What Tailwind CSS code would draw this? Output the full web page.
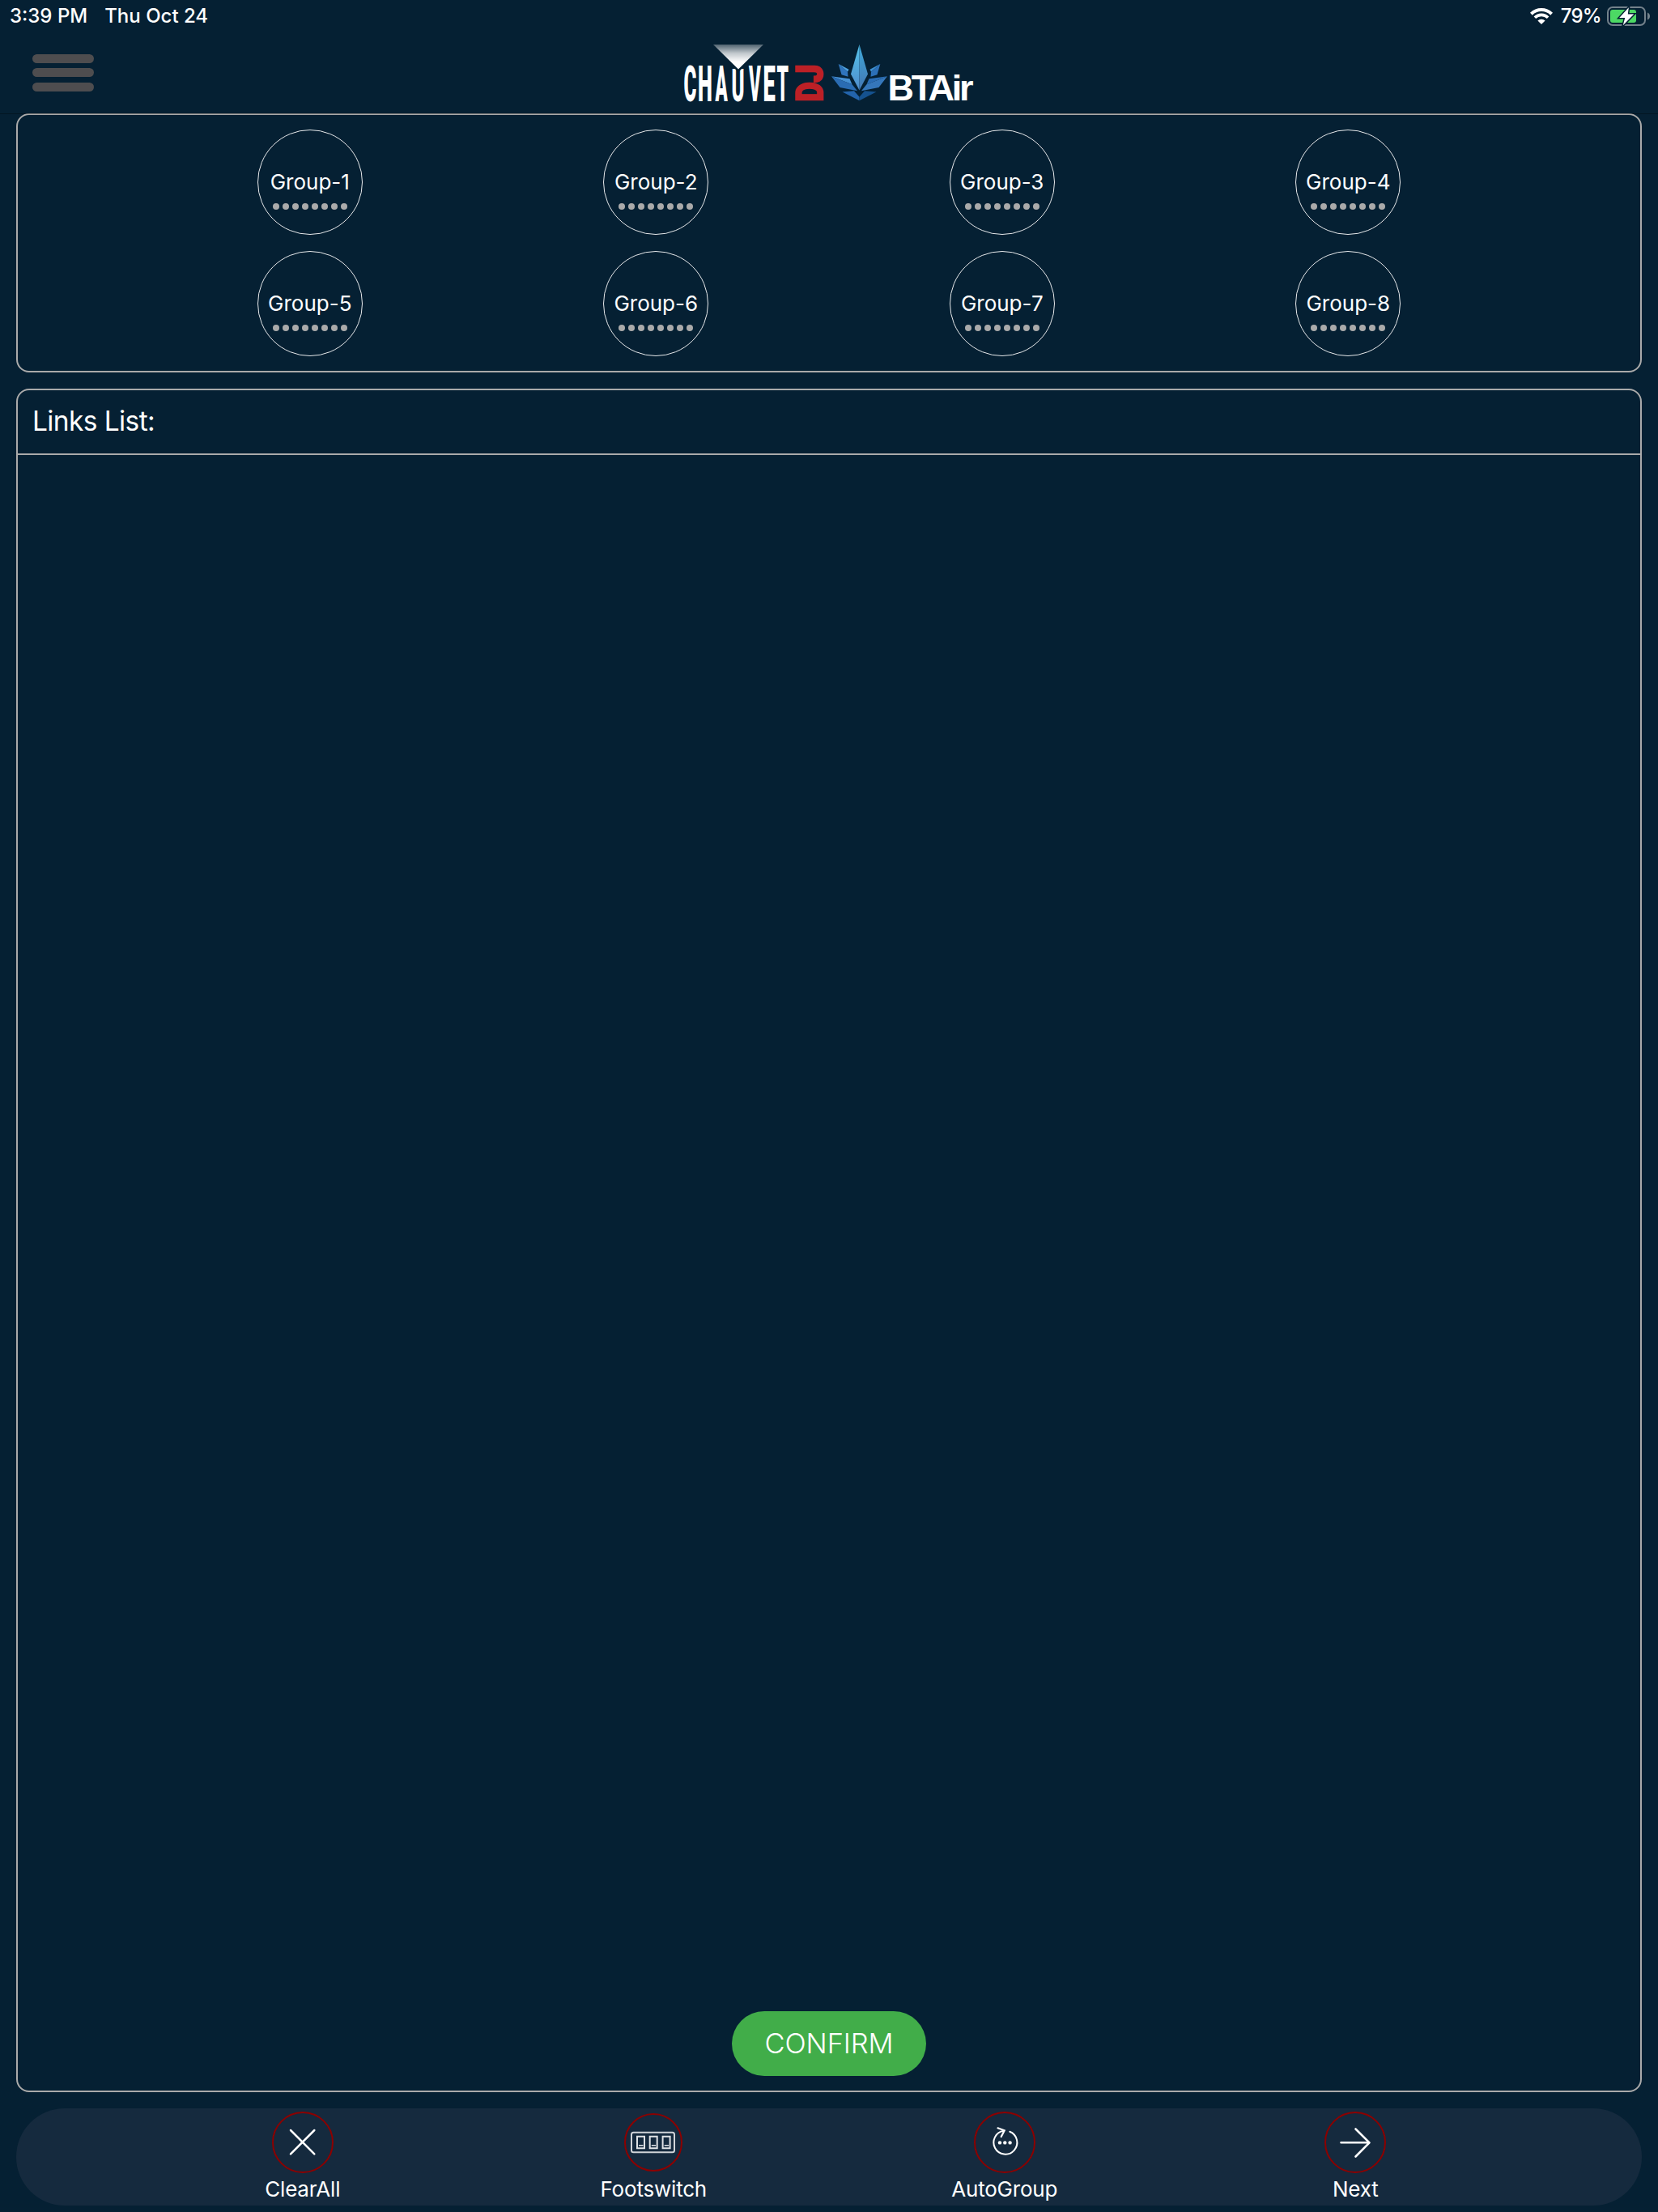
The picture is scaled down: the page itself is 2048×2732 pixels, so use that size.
<!DOCTYPE html>
<html lang="en">

<head>
    <meta charset="UTF-8">
    <meta name="viewport" content="width=device-width, initial-scale=1.0">
    <script src="https://cdn.jsdelivr.net/npm/@tailwindcss/browser@4"></script>
    <title>BTAir</title>
</head>

<body class="w-[2048px] h-[2732px] flex flex-col overflow-hidden bg-[#052033] text-white font-['Inter','Roboto',sans-serif]">
    <header class="relative h-[140px] shrink-0 shadow-[0_1px_0_rgb(0_0_0/0.3)]">
        <!-- status bar -->
        <div class="h-10 pl-3 pr-[10px] flex items-center justify-between text-2xl font-medium leading-10">
            <div class="flex gap-[21px]">
                <span>3:39 PM</span>
                <span>Thu Oct 24</span>
            </div>
            <div class="flex items-center">
                <svg class="w-7 h-5 mr-[10px]" viewBox="0 0 28 20">
                    <path d="M1.4 7.2a18 18 0 0 1 25.2 0" fill="none" stroke="#fff" stroke-width="4" />
                    <path d="M5.9 11.7a11.6 11.6 0 0 1 16.2 0" fill="none" stroke="#fff" stroke-width="3.6" />
                    <path d="M9.4 15.6a6.6 6.6 0 0 1 9.2 0L14 20z" fill="#fff" />
                </svg>
                <span class="mr-[7px] tracking-[-0.7px]">79%</span>
                <svg class="w-[53px] h-[26px]" viewBox="0 0 53 26">
                    <rect x="1" y="2" width="46" height="22" rx="6" fill="none" stroke="#73818b" stroke-width="2" />
                    <path d="M50 8.5c4 1.5 4 7.5 0 9z" fill="#73818b" />
                    <rect x="4" y="5" width="32" height="16" rx="3" fill="#4cd964" />
                    <path d="M26.8 2.2L15.2 15h7l-2.400 9.300L33.300 10.500h-7.500z" fill="#fff" stroke="#052033" stroke-width="3" paint-order="stroke" />
                </svg>
            </div>
        </div>
        <!-- menu + logo -->
        <div class="h-[100px] grid grid-cols-3 items-start">
            <button class="ml-10 mt-[27px] w-[76px] flex flex-col gap-[6.3px]">
                <span class="h-[11px] w-full rounded-full bg-[#4e4d4f]"></span>
                <span class="h-[11px] w-full rounded-full bg-[#4e4d4f]"></span>
                <span class="h-[11px] w-full rounded-full bg-[#4e4d4f]"></span>
            </button>
            <svg class="w-[390px] h-[100px] justify-self-center" viewBox="829 40 390 100">
                <defs>
                    <linearGradient id="beam" x1="0" y1="0" x2="0" y2="1">
                        <stop offset="0" stop-color="#fff" stop-opacity=".3" />
                        <stop offset=".35" stop-color="#fff" stop-opacity=".75" />
                        <stop offset=".7" stop-color="#fff" />
                    </linearGradient>
                    <linearGradient id="petalL" x1="0" y1="0" x2="0" y2="1">
                        <stop offset="0" stop-color="#55c3ea" />
                        <stop offset="1" stop-color="#4f8ccb" />
                    </linearGradient>
                    <linearGradient id="petalR" x1="0" y1="0" x2="0" y2="1">
                        <stop offset="0" stop-color="#3fa9da" />
                        <stop offset="1" stop-color="#4377b4" />
                    </linearGradient>
                </defs>
                <g fill="#fff" font-family="Roboto, sans-serif" font-weight="900" font-size="62">
                    <text transform="translate(844.6 124.5) scale(.39 1)">C</text>
                    <text transform="translate(862 124.5) scale(.41 1)">H</text>
                    <text transform="translate(883.5 124.5) scale(.36 1)">A</text>
                    <text transform="translate(903.5 124.5) scale(.39 .9)">U</text>
                    <text transform="translate(925 124.5) scale(.36 1)">V</text>
                    <text transform="translate(942.5 124.5) scale(.44 1)">E</text>
                    <text transform="translate(959.5 124.5) scale(.37 1)">T</text>
                </g>
                <path d="M881 55h62l-31 32z" fill="#052033" stroke="#052033" stroke-width="3" />
                <path d="M881 55h62l-31 30.5z" fill="url(#beam)" />
                <g fill="#bc2026" stroke="#bc2026" stroke-width="2" font-family="Roboto, sans-serif" font-weight="900" font-size="47">
                    <text transform="translate(1016 125.500) rotate(-90) scale(.8 1)">D</text>
                    <text transform="translate(1016 102) rotate(-90) scale(.86 1)">J</text>
                </g>
                <g>
                    <path d="M1035.7 79l12.8 6.8-1.5 3z" fill="#4d9fdc" />
                    <path d="M1035.7 79l11.3 9.8.5 6-8-2.5z" fill="#2f74bd" />
                    <path d="M1027 94.3l22.5 3 3 7z" fill="#4690d3" />
                    <path d="M1027 94.300l25.500 10 6.500 8-21.500-4.300z" fill="#2a6cb3" />
                    <path d="M1040.5 113.5l14.500-1.300 6.500 7.500v4.500z" fill="#2364ac" />
                </g>
                <g transform="matrix(-1 0 0 1 2123 0)">
                    <path d="M1035.7 79l12.8 6.8-1.5 3z" fill="#3d8ecf" />
                    <path d="M1035.7 79l11.3 9.8.5 6-8-2.5z" fill="#2c70b8" />
                    <path d="M1027 94.3l22.5 3 3 7z" fill="#2a6db5" />
                    <path d="M1027 94.300l25.500 10 6.500 8-21.500-4.300z" fill="#3577bb" />
                    <path d="M1040.5 113.5l14.500-1.300 6.500 7.500v4.500z" fill="#15528f" />
                </g>
                <path d="M1061.5 55L1051 91.5l10.5 20z" fill="url(#petalL)" />
                <path d="M1061.5 55L1072 91.5l-10.500 20z" fill="url(#petalR)" />
                <text x="1096.5" y="124" textLength="106" fill="#fff" font-family="Liberation Sans, sans-serif" font-weight="700" font-size="45">BTAir</text>
            </svg>
        </div>
    </header>

    <main class="flex-1 px-5 flex flex-col gap-5 pb-5">
        <section class="h-[320px] shrink-0 border-2 border-[#aaa] rounded-2xl pt-[18px]">
            <div id="groups" class="w-[1710px] mx-auto grid grid-cols-4 justify-items-center gap-y-5"></div>
        </section>

        <section class="flex-1 border-2 border-[#aaa] rounded-2xl flex flex-col">
            <h2 class="h-20 border-b-2 border-[#aaa] pl-[18px] text-[33.5px] leading-[76px] tracking-[-0.6px]">Links List:</h2>
            <div class="flex-1"></div>
            <button class="w-60 h-20 mb-[18px] self-center rounded-full bg-[#41ad49] text-[34.5px] font-light tracking-[-0.1px]">CONFIRM</button>
        </section>
    </main>

    <footer class="h-[120px] shrink-0 mx-5 mb-2 rounded-full bg-[#152a3e]">
        <div class="w-[1734px] mx-auto pt-1 grid grid-cols-4 text-center text-[26px] leading-8 tracking-[-0.2px]">
            <div class="flex flex-col items-center">
                <svg class="w-[76px] h-[76px]" viewBox="0 0 76 76" fill="none" stroke-linecap="round">
                    <circle cx="38" cy="38" r="37" stroke="#8b0000" stroke-width="2" />
                    <path d="M23 23l29.300 29.300M52.300 23L23 52.300" stroke="#fff" stroke-width="2.5" />
                </svg>
                <span class="mt-1">ClearAll</span>
            </div>
            <div class="flex flex-col items-center">
                <svg class="w-[76px] h-[76px]" viewBox="0 0 76 76" fill="none">
                    <circle cx="38" cy="38" r="35" stroke="#8b0000" stroke-width="2" />
                    <rect x="11" y="25.7" width="53" height="24.6" rx="2.5" stroke="#d0d4d8" stroke-width="2" />
                    <path d="M18 30.7h9v14.600h-9zM33.700 30.7h9v14.600h-9zM49.600 30.7h9v14.600h-9z" stroke="#dfe2e5" stroke-width="2" />
                    <path d="M20 41.7h5.500M35.700 41.7h5.500M51.600 41.7h5.500" stroke="#dfe2e5" stroke-width="1.5" />
                </svg>
                <span class="mt-1">Footswitch</span>
            </div>
            <div class="flex flex-col items-center">
                <svg class="w-[76px] h-[76px]" viewBox="0 0 76 76" fill="none" stroke-linecap="round">
                    <circle cx="38" cy="38" r="37" stroke="#8b0000" stroke-width="2" />
                    <path d="M44.300 24.700A14.500 14.500 0 1 1 36.800 23.800" stroke="#fff" stroke-width="2" />
                    <path d="M29.500 20.300l8.200 3-4 7.700" stroke="#fff" stroke-width="2.2" />
                    <circle cx="32" cy="38.4" r="2.2" fill="#fff" />
                    <circle cx="38.3" cy="38.4" r="2.2" fill="#fff" />
                    <circle cx="44.6" cy="38.4" r="2.2" fill="#fff" />
                </svg>
                <span class="mt-1">AutoGroup</span>
            </div>
            <div class="flex flex-col items-center">
                <svg class="w-[76px] h-[76px]" viewBox="0 0 76 76" fill="none" stroke-linecap="round" stroke-linejoin="round">
                    <circle cx="38" cy="38" r="37" stroke="#8b0000" stroke-width="2" />
                    <path d="M20.500 38.300H55M38.500 21.500L55.500 38.300 38.500 55.500" stroke="#fff" stroke-width="2.6" />
                </svg>
                <span class="mt-1">Next</span>
            </div>
        </div>
    </footer>

    <script>
        const groups = document.getElementById("groups");

        for (let i = 1; i <= 8; i++) {
            let dots = "";
            for (let d = 0; d < 8; d++) {
                dots += '<i class="size-2 rounded-full bg-[#aaa]"></i>';
            }
            groups.innerHTML += `
                <div class="size-[130px] rounded-full border border-white/90 pt-[48px] flex flex-col items-center">
                    <span class="text-[26px] leading-[32px]">Group-${i}</span>
                    <div class="mt-[10px] flex gap-1">${dots}</div>
                </div>`;
        }
    </script>
</body>

</html>
